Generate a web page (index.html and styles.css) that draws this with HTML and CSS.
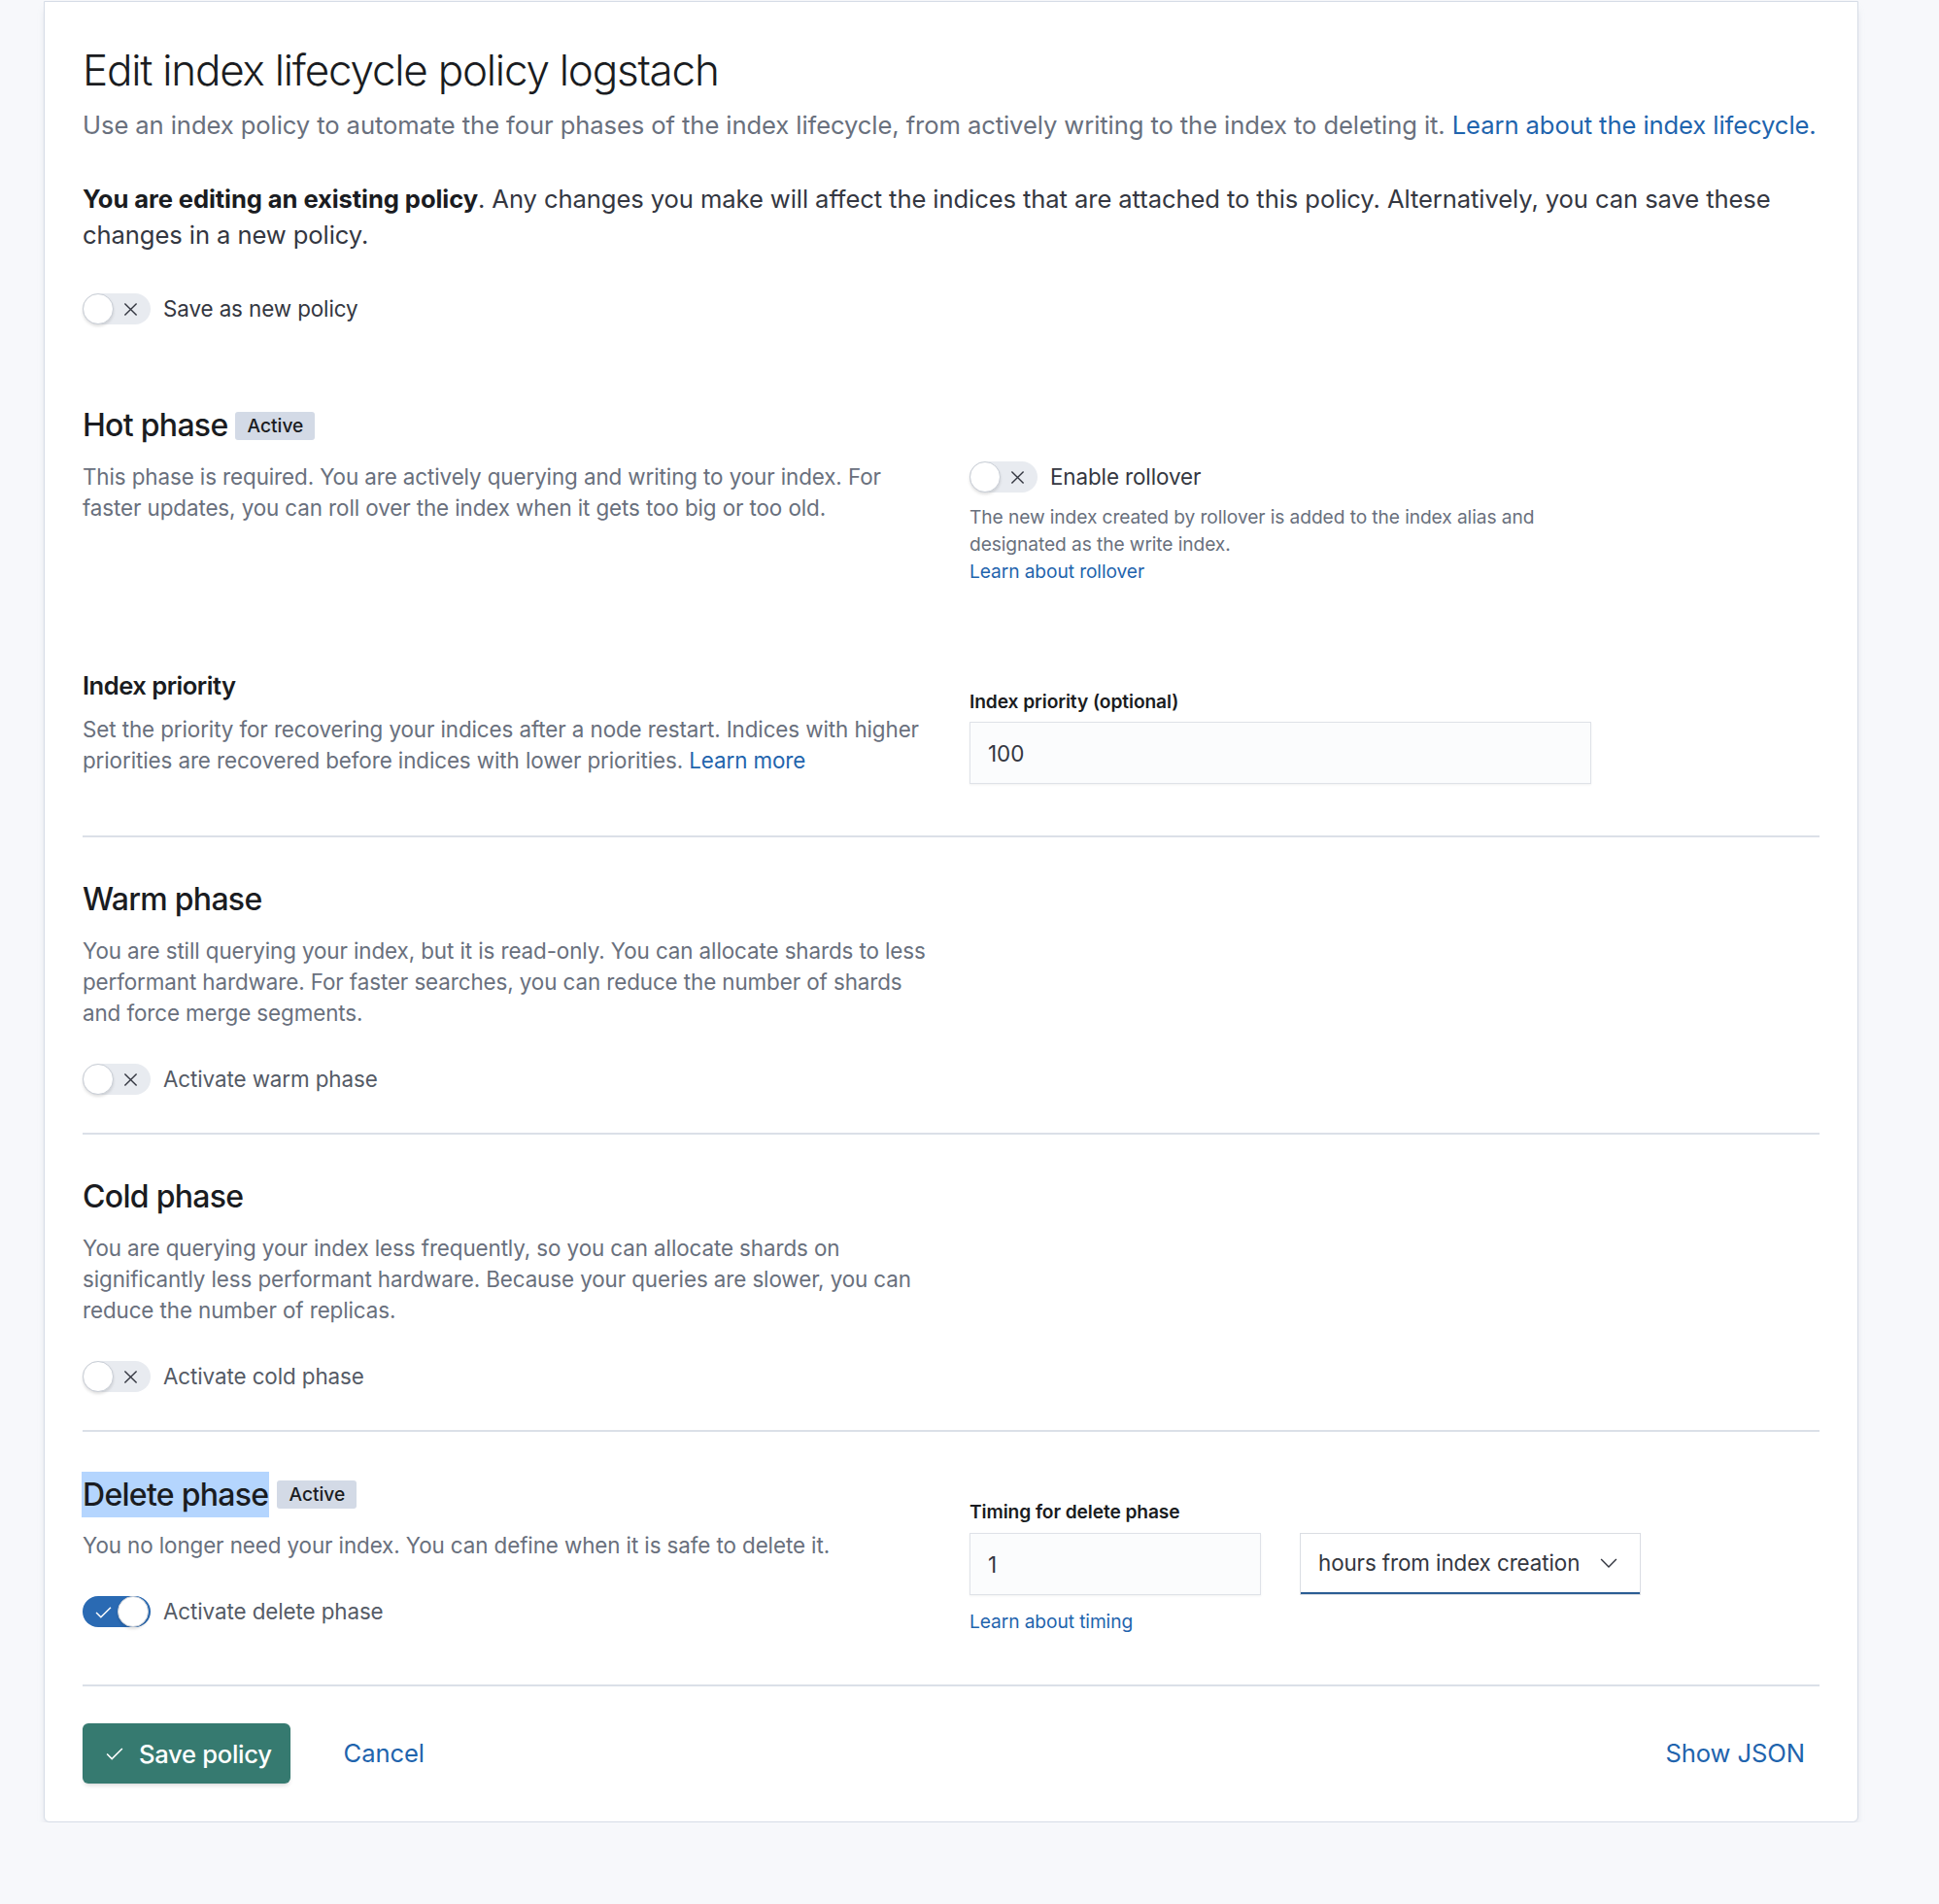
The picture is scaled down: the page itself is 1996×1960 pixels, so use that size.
FILE: index.html
```html
<!DOCTYPE html>
<html lang="en">
<head>
    <meta charset="UTF-8">
    <meta name="viewport" content="width=device-width, initial-scale=1.0">
    <title>Edit index lifecycle policy</title>
    <link rel="stylesheet" href="styles.css">
</head>
<body>

    <div class="panel">
        <h1 class="page-title">Edit index lifecycle policy logstach</h1>
        <p class="page-desc">Use an index policy to automate the four phases of the index lifecycle, from actively writing to the index to deleting it. <a href="#">Learn about the index lifecycle.</a></p>
        <p class="notice"><strong>You are editing an existing policy</strong>. Any changes you make will affect the indices that are attached to this policy. Alternatively, you can save these changes in a new policy.</p>

        <div class="switch-row switch-top">
            <span class="switch">
                <span class="knob"></span>
                <svg class="switch-icon" viewBox="0 0 16 16"><path d="M1.5 1.5l13 13M14.5 1.5l-13 13"/></svg>
            </span>
            <span class="switch-label">Save as new policy</span>
        </div>

        <!-- Hot phase -->
        <section class="phase phase-hot">
            <div class="row">
                <div>
                    <h2 class="phase-title">Hot phase <span class="badge">Active</span></h2>
                    <p class="desc">This phase is required. You are actively querying and writing to your index. For faster updates, you can roll over the index when it gets too big or too old.</p>
                </div>
                <div class="fields fields-rollover">
                    <div class="switch-row">
                        <span class="switch">
                            <span class="knob"></span>
                            <svg class="switch-icon" viewBox="0 0 16 16"><path d="M1.5 1.5l13 13M14.5 1.5l-13 13"/></svg>
                        </span>
                        <span class="switch-label">Enable rollover</span>
                    </div>
                    <p class="help">The new index created by rollover is added to the index alias and designated as the write index.<br><a href="#">Learn about rollover</a></p>
                </div>
            </div>

            <div class="row row-priority">
                <div>
                    <h3 class="sub-title">Index priority</h3>
                    <p class="desc desc-tight">Set the priority for recovering your indices after a node restart. Indices with higher priorities are recovered before indices with lower priorities. <a href="#">Learn more</a></p>
                </div>
                <div class="fields fields-priority">
                    <div class="label">Index priority (optional)</div>
                    <input class="field field-wide" type="text" value="100">
                </div>
            </div>
        </section>

        <!-- Warm phase -->
        <section class="phase">
            <div class="col-text">
                <h2 class="phase-title">Warm phase</h2>
                <p class="desc">You are still querying your index, but it is read-only. You can allocate shards to less performant hardware. For faster searches, you can reduce the number of shards and force merge segments.</p>
                <div class="switch-row switch-phase">
                    <span class="switch">
                        <span class="knob"></span>
                        <svg class="switch-icon" viewBox="0 0 16 16"><path d="M1.5 1.5l13 13M14.5 1.5l-13 13"/></svg>
                    </span>
                    <span class="switch-label muted">Activate warm phase</span>
                </div>
            </div>
        </section>

        <!-- Cold phase -->
        <section class="phase">
            <div class="col-text">
                <h2 class="phase-title">Cold phase</h2>
                <p class="desc">You are querying your index less frequently, so you can allocate shards on significantly less performant hardware. Because your queries are slower, you can reduce the number of replicas.</p>
                <div class="switch-row switch-phase">
                    <span class="switch">
                        <span class="knob"></span>
                        <svg class="switch-icon" viewBox="0 0 16 16"><path d="M1.5 1.5l13 13M14.5 1.5l-13 13"/></svg>
                    </span>
                    <span class="switch-label muted">Activate cold phase</span>
                </div>
            </div>
        </section>

        <!-- Delete phase -->
        <section class="phase phase-delete">
            <div class="row">
                <div>
                    <h2 class="phase-title"><span class="selected">Delete phase</span> <span class="badge">Active</span></h2>
                    <p class="desc desc-delete">You no longer need your index. You can define when it is safe to delete it.</p>
                    <div class="switch-row switch-phase">
                        <span class="switch switch-on">
                            <span class="knob"></span>
                            <svg class="switch-icon" viewBox="0 0 16 16"><path d="M1 8.5l4.5 4.5L15 3.5"/></svg>
                        </span>
                        <span class="switch-label muted">Activate delete phase</span>
                    </div>
                </div>
                <div class="fields fields-timing">
                    <div class="label">Timing for delete phase</div>
                    <div class="field-group">
                        <input class="field field-num" type="text" value="1">
                        <div class="select">
                            <span>hours from index creation</span>
                            <svg class="chevron" viewBox="0 0 16 16"><path d="M1 4.5l7 7 7-7"/></svg>
                        </div>
                    </div>
                    <p class="help help-timing"><a href="#">Learn about timing</a></p>
                </div>
            </div>
        </section>

        <div class="footer">
            <button class="btn-save">
                <svg class="btn-icon" viewBox="0 0 16 16"><path d="M1 8.5l4.5 4.5L15 3.5"/></svg>
                Save policy
            </button>
            <a class="btn-link btn-cancel" href="#">Cancel</a>
            <a class="btn-link btn-json" href="#">Show JSON</a>
        </div>
    </div>

</body>
</html>
```

FILE: styles.css
```css
body {
    margin: 0;
    background: #f7f8fb;
    font-family: Inter, "Noto Sans", sans-serif;
    color: #343741;
    letter-spacing: -0.006em;
}
a {
    color: #1f64ad;
    text-decoration: none;
}
p {
    margin: 0;
}
.panel {
    box-sizing: border-box;
    width: 1868px;
    margin: 1px 0 0 45px;
    padding: 43px 39px 39px;
    background: #fff;
    border: 1px solid #d6dce6;
    border-radius: 0 0 6px 6px;
    box-shadow: 0 6px 8px -3px rgba(152, 162, 179, 0.4);
}
.page-title {
    margin: 0;
    font-size: 44px;
    font-weight: 300;
    line-height: 54px;
    letter-spacing: -0.028em;
    color: #1a1c21;
}
.page-desc {
    margin-top: 11px;
    font-size: 25.6px;
    line-height: 38px;
    letter-spacing: -0.0035em;
    color: #69707d;
}
.notice {
    margin-top: 38px;
    font-size: 25.6px;
    line-height: 37px;
}
.notice strong {
    font-weight: 700;
    color: #1a1c21;
}

/* switches */
.switch-row {
    display: flex;
    align-items: center;
    gap: 13px;
    margin-top: 39px;
}
.switch-top {
    margin-top: 42px;
}
.switch {
    display: flex;
    align-items: center;
    flex: none;
    width: 70px;
    height: 32px;
    border-radius: 16px;
    background: #e8ebf0;
}
.knob {
    box-sizing: border-box;
    width: 32px;
    height: 32px;
    border-radius: 50%;
    background: #fff;
    border: 1px solid #c9ced6;
    box-shadow: 0 2px 3px rgba(0, 0, 0, 0.12);
}
.switch-icon {
    width: 15px;
    height: 15px;
    margin-left: 10px;
    fill: none;
    stroke: #343741;
    stroke-width: 1.5;
}
.switch-on {
    flex-direction: row-reverse;
    justify-content: flex-end;
    background: #2a6ab3;
}
.switch-on .switch-icon {
    width: 17px;
    height: 17px;
    margin: 0 6px 0 13px;
    stroke: #fff;
    stroke-width: 1.4;
}
.switch-label {
    font-size: 22.4px;
    line-height: 32px;
    color: #343741;
}
.switch-label.muted {
    color: #555b66;
}

/* phases */
.phase {
    padding: 44px 0 39px;
    border-bottom: 2px solid #dbe0e8;
}
.phase-hot {
    padding: 84px 0 53px;
}
.phase-delete {
    padding: 41px 0 51px;
}
.row {
    display: grid;
    grid-template-columns: 880px 1fr;
    column-gap: 33px;
}
.col-text {
    width: 880px;
}
.row-priority {
    margin-top: 88px;
}
.phase-title {
    display: flex;
    align-items: center;
    gap: 8px;
    margin: 0;
    font-size: 32px;
    font-weight: 500;
    line-height: 40px;
    letter-spacing: -0.022em;
    color: #1a1c21;
}
.selected {
    background: #b4d5fe;
    padding: 3.5px 1px;
    margin-left: -1px;
}
.badge {
    padding: 0 12px;
    font-size: 19.2px;
    font-weight: 500;
    line-height: 29px;
    letter-spacing: 0;
    color: #1a1c21;
    background: #d3dae6;
    border-radius: 3px;
}
.sub-title {
    margin: 0;
    font-size: 25.6px;
    font-weight: 600;
    line-height: 32px;
    letter-spacing: -0.02em;
    color: #1a1c21;
}
.desc {
    margin-top: 17px;
    font-size: 22.4px;
    line-height: 32px;
    color: #69707d;
}
.desc-tight {
    margin-top: 13px;
}
.desc-delete {
    margin-top: 13px;
}
.switch-phase {
    margin-top: 36px;
}

/* form fields */
.fields-rollover {
    padding-top: 57px;
}
.fields-rollover .switch-row {
    margin-top: 0;
}
.fields-rollover .help {
    max-width: 640px;
}
.fields-priority {
    padding-top: 18px;
}
.fields-timing {
    padding-top: 27px;
}
.help {
    margin-top: 11px;
    font-size: 19.2px;
    line-height: 28px;
    color: #69707d;
}
.help-timing {
    margin-top: 13px;
}
.label {
    font-size: 19.2px;
    font-weight: 600;
    line-height: 28px;
    color: #1a1c21;
}
.field {
    box-sizing: border-box;
    display: block;
    height: 64px;
    margin-top: 7px;
    padding: 0 19px;
    font: inherit;
    font-size: 22.4px;
    color: #343741;
    background: #fbfcfd;
    border: none;
    box-shadow: inset 0 0 0 1px #dfe2e8, 0 1px 2px rgba(0, 0, 0, 0.06);
    outline: none;
}
.field-wide {
    width: 640px;
}
.field-group {
    display: flex;
    gap: 40px;
    margin-top: 8px;
}
.field-group .field {
    margin-top: 0;
}
.field-num {
    width: 300px;
}
.select {
    box-sizing: border-box;
    display: flex;
    align-items: center;
    justify-content: space-between;
    flex: none;
    width: 351px;
    height: 64px;
    padding: 0 24px 3px 19px;
    font-size: 22.4px;
    white-space: nowrap;
    color: #343741;
    background: #fff;
    box-shadow: inset 0 0 0 1px #dadde3, inset 0 -3px 0 #2b5d94;
}
.chevron {
    width: 18px;
    height: 18px;
    fill: none;
    stroke: #343741;
    stroke-width: 1.3;
}

/* footer */
.footer {
    display: flex;
    align-items: center;
    padding-top: 38px;
}
.btn-save {
    display: flex;
    align-items: center;
    gap: 16px;
    height: 62px;
    padding: 0 19px 0 24px;
    font: inherit;
    font-size: 25.6px;
    font-weight: 500;
    letter-spacing: -0.012em;
    color: #fff;
    background: #367a70;
    border: none;
    border-radius: 6px;
    box-shadow: 0 3px 5px -2px rgba(0, 0, 0, 0.2);
    cursor: pointer;
}
.btn-icon {
    width: 18px;
    height: 18px;
    fill: none;
    stroke: #fff;
    stroke-width: 1.4;
}
.btn-link {
    padding: 0 15px;
    font-size: 25.6px;
    line-height: 62px;
}
.btn-cancel {
    margin-left: 40px;
}
.btn-json {
    margin-left: auto;
}
```
